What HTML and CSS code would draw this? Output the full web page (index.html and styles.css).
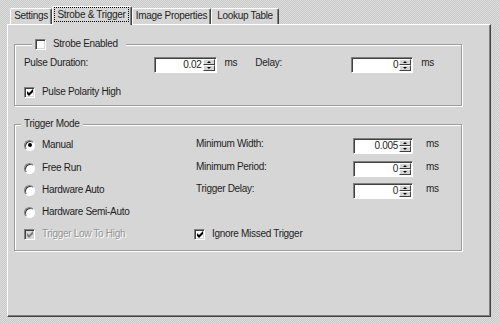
FILE: index.html
```html
<!DOCTYPE html>
<html lang="en">
  <head>
    <meta charset="UTF-8" />
    <title>Strobe &amp; Trigger</title>
    <link rel="stylesheet" href="styles.css">
  </head>
  <body>
    <div class="dialog">
      <div class="tabs">
        <div class="tab tab-settings">Settings</div>
        <div class="tab active"><span class="focus">Strobe &amp; Trigger</span></div>
        <div class="tab tab-image">Image Properties</div>
        <div class="tab tab-lookup">Lookup Table</div>
      </div>

      <div class="pane">
        <!-- strobe -->
        <fieldset class="group strobe">
          <legend class="legend-check">
            <span class="check"></span>
            <span>Strobe Enabled</span>
          </legend>
          <div class="row">
            <span class="lbl lbl-pulse">Pulse Duration:</span>
            <div class="spin">
              <span class="val">0.02</span>
              <span class="arrows"><span class="btn"><i class="up"></i></span><span class="btn"><i class="down"></i></span></span>
            </div>
            <span class="unit">ms</span>
            <span class="lbl lbl-delay">Delay:</span>
            <div class="spin">
              <span class="val">0</span>
              <span class="arrows"><span class="btn"><i class="up"></i></span><span class="btn"><i class="down"></i></span></span>
            </div>
            <span class="unit">ms</span>
          </div>
          <div class="option polarity">
            <span class="check"><svg viewBox="0 0 7 7" width="7" height="7"><polygon points="0,2 2,4 6,0 6,3 2,7 0,5" /></svg></span>
            <span>Pulse Polarity High</span>
          </div>
        </fieldset>

        <!-- trigger -->
        <fieldset class="group trigger">
          <legend class="legend-text">Trigger Mode</legend>
          <div class="trigger-grid">
            <div class="option"><span class="radio on"></span><span>Manual</span></div>
            <span class="lbl">Minimum Width:</span>
            <div class="spin narrow">
              <span class="val">0.005</span>
              <span class="arrows"><span class="btn"><i class="up"></i></span><span class="btn"><i class="down"></i></span></span>
            </div>
            <span class="unit wide">ms</span>

            <div class="option"><span class="radio"></span><span>Free Run</span></div>
            <span class="lbl">Minimum Period:</span>
            <div class="spin narrow">
              <span class="val">0</span>
              <span class="arrows"><span class="btn"><i class="up"></i></span><span class="btn"><i class="down"></i></span></span>
            </div>
            <span class="unit wide">ms</span>

            <div class="option"><span class="radio"></span><span>Hardware Auto</span></div>
            <span class="lbl">Trigger Delay:</span>
            <div class="spin narrow">
              <span class="val">0</span>
              <span class="arrows"><span class="btn"><i class="up"></i></span><span class="btn"><i class="down"></i></span></span>
            </div>
            <span class="unit wide">ms</span>

            <div class="option full"><span class="radio"></span><span>Hardware Semi-Auto</span></div>

            <div class="option disabled">
              <span class="check"><svg viewBox="0 0 7 7" width="7" height="7"><polygon points="0,2 2,4 6,0 6,3 2,7 0,5" /></svg></span>
              <span>Trigger Low To High</span>
            </div>
            <div class="option ignore">
              <span class="check"><svg viewBox="0 0 7 7" width="7" height="7"><polygon points="0,2 2,4 6,0 6,3 2,7 0,5" /></svg></span>
              <span>Ignore Missed Trigger</span>
            </div>
          </div>
        </fieldset>
      </div>
    </div>
  </body>
</html>
```

FILE: styles.css
```css
* {
  box-sizing: border-box;
}

body {
  margin: 0;
  width: 500px;
  height: 324px;
  overflow: hidden;
  font-family: "Liberation Sans", Arial, sans-serif;
  font-size: 10px;
  letter-spacing: -0.3px;
  color: #1e1e1e;
  background: repeating-conic-gradient(#cacaca 0 25%, #dcdcdc 0 50%) 0 0 / 2px 2px;
}

.dialog {
  padding: 6px 0 0 7px;
}

/* tabs */
.tabs {
  display: flex;
  align-items: flex-end;
  height: 18px;
  padding-left: 3px;
}

.tab {
  height: 16px;
  line-height: 14px;
  text-align: center;
  white-space: nowrap;
  background: #d6d6d6;
  border-top: 1px solid #fff;
  border-left: 1px solid #fff;
  border-right: 1px solid #404040;
  box-shadow: inset -1px 0 #808080;
  border-radius: 2px 2px 0 0;
}
.tab-settings { width: 42px; }
.tab-image { width: 79px; }
.tab-lookup { width: 68px; }

.tab.active {
  width: 80px;
  height: 19px;
  margin-bottom: -1px;
  padding: 0 2px 3px 1px;
  position: relative;
  z-index: 1;
}

.focus {
  display: block;
  height: 100%;
  line-height: 13px;
  border: 1px dotted #000;
}

/* pane */
.pane {
  width: 484px;
  height: 293px;
  background: #d6d6d6;
  border-top: 1px solid #fff;
  border-left: 1px solid #fff;
  border-right: 1px solid #404040;
  border-bottom: 1px solid #404040;
  box-shadow: inset -1px -1px #808080;
  padding: 12px 0 0 6px;
}

.group {
  margin: 0;
  width: 448px;
  min-width: 0;
  border: 1px solid #9c9c9c;
  box-shadow: 1px 1px 0 #fff, inset 1px 1px 0 #fff;
}

.strobe {
  padding: 6px 9px 6px 9px;
}

.trigger {
  margin-top: 12px;
  padding: 8px 9px 1px 9px;
}

legend {
  background: #d6d6d6;
  line-height: 14px;
  height: 14px;
}

.legend-check {
  display: flex;
  align-items: center;
  gap: 7px;
  margin-left: 8px;
  padding: 0 8px 0 3px;
}

.legend-text {
  margin-left: -3px;
  padding: 0 3px;
  line-height: 12px;
  height: 12px;
}

.row {
  display: flex;
  align-items: flex-start;
  height: 16px;
}

.lbl {
  line-height: 12px;
  white-space: nowrap;
}
.lbl-pulse { width: 131px; }
.lbl-delay { width: 96px; }

.unit {
  width: 39px;
  padding-left: 8px;
  line-height: 12px;
}

/* spin box */
.spin {
  display: flex;
  width: 63px;
  height: 16px;
  padding: 1px;
  background: #fff;
  border: 1px solid;
  border-color: #808080 #fff #fff #808080;
  box-shadow: inset 1px 1px 0 #404040;
}
.spin.narrow {
  width: 60px;
}

.val {
  flex: 1;
  text-align: right;
  line-height: 12px;
  padding-right: 1px;
}

.arrows {
  display: flex;
  flex-direction: column;
  width: 12px;
}

.btn {
  flex: 1;
  display: flex;
  align-items: center;
  justify-content: center;
  background: #d6d6d6;
  border-top: 1px solid #fff;
  border-left: 1px solid #fff;
  border-right: 1px solid #404040;
  border-bottom: 1px solid #404040;
}

.up,
.down {
  width: 0;
  height: 0;
  border-left: 2px solid transparent;
  border-right: 2px solid transparent;
}
.up { border-bottom: 2px solid #000; }
.down { border-top: 2px solid #000; }

/* checkboxes and radios */
.option {
  display: flex;
  align-items: center;
  gap: 7px;
  height: 14px;
  line-height: 14px;
  white-space: nowrap;
}

.polarity {
  margin-top: 12px;
}

.check {
  display: flex;
  align-items: center;
  justify-content: center;
  width: 11px;
  height: 11px;
  flex: none;
  background: #fff;
  border: 1px solid;
  border-color: #808080 #fff #fff #808080;
  box-shadow: inset 1px 1px 0 #404040, inset -1px -1px 0 #d6d6d6;
}
.check svg {
  fill: #000;
  margin: 1px 0 0 1px;
}

.radio {
  display: flex;
  align-items: center;
  justify-content: center;
  width: 11px;
  height: 11px;
  flex: none;
  border-radius: 50%;
  background: #fff;
  border: 1px solid;
  border-color: #808080 #fff #fff #808080;
  box-shadow: inset 1px 1px 0 #404040;
}
.radio.on::after {
  content: "";
  width: 4px;
  height: 4px;
  border-radius: 50%;
  background: #000;
}

.disabled {
  color: #949494;
  text-shadow: 1px 1px 0 #fff;
}
.disabled .check {
  background: #d6d6d6;
}
.disabled .check svg {
  fill: #808080;
}

/* trigger grid */
.trigger-grid {
  display: grid;
  grid-template-columns: 172px 157px 60px auto;
  grid-template-rows: 23px 22px 22px 22px 22px;
  align-items: start;
}

.full {
  grid-column: 1 / -1;
}

.ignore {
  grid-column: 2 / -1;
  margin-left: -2px;
}

.unit.wide {
  width: auto;
  padding-left: 13px;
}
```
